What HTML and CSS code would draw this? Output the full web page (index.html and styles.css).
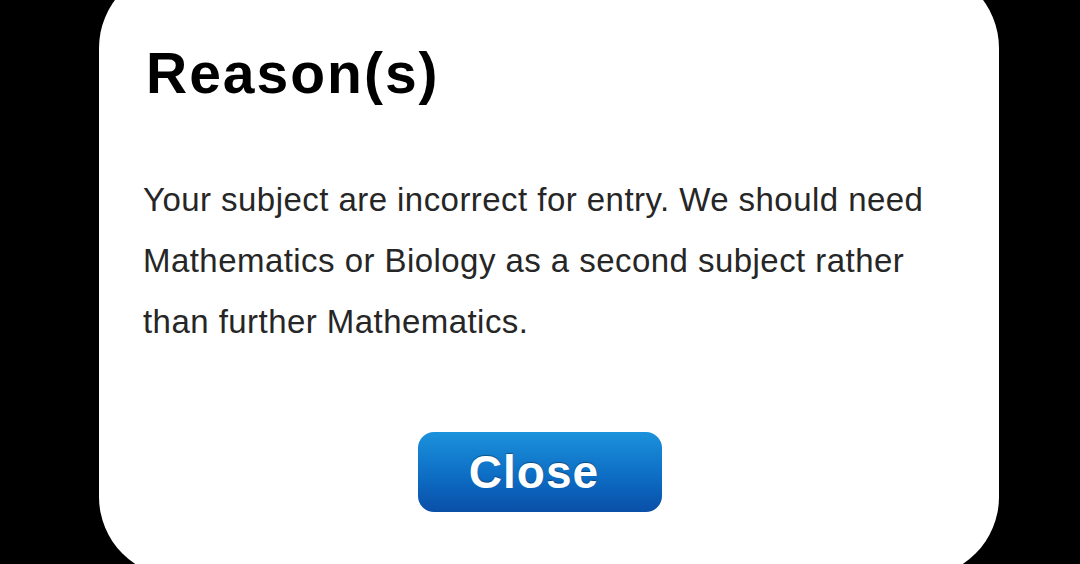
FILE: index.html
```html
<!DOCTYPE html>
<html>
<head>
<meta charset="utf-8">
<link rel="stylesheet" href="styles.css">
</head>
<body>
<div class="card">
  <h1 class="title">Reason(s)</h1>
  <p class="message">Your subject are incorrect for entry. We should need Mathematics or Biology as a second subject rather than further Mathematics.</p>
  <div class="actions">
    <button class="close-btn">Close</button>
  </div>
</div>
</body>
</html>
```
FILE: styles.css
```css
html, body {
  margin: 0;
  padding: 0;
  background: #000;
  height: 564px;
  overflow: hidden;
}
.card {
  box-sizing: border-box;
  margin: -32px 0 0 99px;
  width: 900px;
  height: 609px;
  background: #fff;
  border-radius: 80px;
  padding: 77px 40px 0 44px;
  font-family: "Liberation Sans", Arial, sans-serif;
}
.title {
  margin: 0 0 0 3px;
  font-size: 57px;
  line-height: 1;
  font-weight: bold;
  letter-spacing: 2px;
  color: #000;
}
.message {
  margin: 67px 0 0 0;
  font-size: 33px;
  line-height: 61px;
  letter-spacing: 0.45px;
  color: #262626;
  width: 800px;
}
.actions {
  display: flex;
  padding-left: 275px;
  margin-top: 80px;
}
.close-btn {
  width: 244px;
  height: 80px;
  border: none;
  border-radius: 16px;
  background: linear-gradient(#1c92dc, #0d6dc4 55%, #0a4fa8);
  color: #fff;
  font-family: "Liberation Sans", Arial, sans-serif;
  font-weight: bold;
  font-size: 46px;
  letter-spacing: 1px;
  text-shadow: 0 -1px 1px rgba(0,0,0,0.35);
  padding: 0 12px 0 0;
}
```
